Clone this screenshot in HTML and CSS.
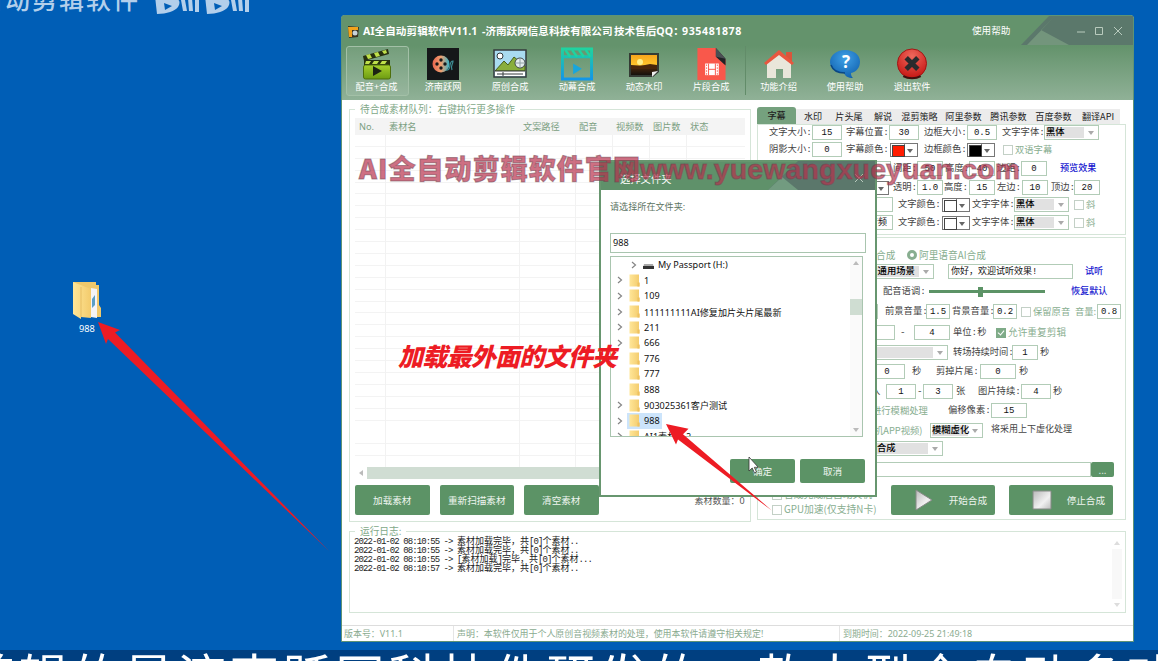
FILE: index.html
```html
<!DOCTYPE html>
<html lang="zh-CN">
<head>
<meta charset="utf-8">
<title>AI全自动剪辑软件</title>
<link rel="stylesheet" href="styles.css">
</head>
<body>
<svg class="defs" width="0" height="0">
  <defs>
    <linearGradient id="gold" x1="0" x2="1"><stop offset="0" stop-color="#ffe698"/><stop offset="1" stop-color="#f3cb6c"/></linearGradient>
    <linearGradient id="lime" x1="0" x2="0" y1="0" y2="1"><stop offset="0" stop-color="#a6cf2c"/><stop offset="1" stop-color="#6d9c12"/></linearGradient>
    <linearGradient id="aqua" x1="0" x2="0" y1="0" y2="1"><stop offset="0" stop-color="#1fd3a0"/><stop offset="1" stop-color="#1296e8"/></linearGradient>
    <linearGradient id="sunset" x1="0" x2="0" y1="0" y2="1"><stop offset="0" stop-color="#f7a51c"/><stop offset=".5" stop-color="#ffc62c"/><stop offset=".56" stop-color="#4e2a0c"/><stop offset="1" stop-color="#15110c"/></linearGradient>
    <linearGradient id="reel" x1="0" x2="1"><stop offset="0" stop-color="#e8654f"/><stop offset=".5" stop-color="#f0a070"/><stop offset="1" stop-color="#35b3c8"/></linearGradient>
    <linearGradient id="steel" x1="0" x2="1" y1="0" y2="1"><stop offset="0" stop-color="#b9b9b9"/><stop offset=".6" stop-color="#f1f1f1"/><stop offset="1" stop-color="#bdbdbd"/></linearGradient>
    <radialGradient id="blue" cx=".5" cy=".3" r=".8"><stop offset="0" stop-color="#3fa0e6"/><stop offset="1" stop-color="#0b5aa8"/></radialGradient>
    <radialGradient id="red" cx=".5" cy=".25" r=".8"><stop offset="0" stop-color="#f0685c"/><stop offset="1" stop-color="#c2120f"/></radialGradient>
    <symbol id="folder" viewBox="0 0 11 13"><path d="M.5 .5h9.500v8l.5.500v3.500H.5z" fill="url(#gold)"/><path d="M8.500 8.500h2v4h-2z" fill="#eec15e"/></symbol>
    <symbol id="chev" viewBox="0 0 6 8"><path d="M1 1l3.500 3L1 7" fill="none" stroke="#858585" stroke-width="1.200"/></symbol>
  </defs>
</svg>

<main class="desktop">
  <div class="brand">
    <span>自动剪辑软件</span>
    <svg width="98" height="16" viewBox="0 0 98 16"><g id="bili" fill="#b3cfeb"><path fill-rule="evenodd" d="M0-4h10c13 0 17 5 13 11-3 4-11 7-21 7zM9 3l1 7 7-4z"/><path d="M26 0h4l2 11h-4zM33-2h4l1 13h-4zM40 0h4v12h-4z"/></g><use href="#bili" x="50"/></svg>
  </div>

  <div class="shortcut">
    <svg width="30" height="38" viewBox="0 0 30 38"><path d="M1 1h23v3h3v20l2 3v9H11z" fill="#efc96c"/><path d="M19 7l6 1v29l-6-1z" fill="#f4f4f6"/><path d="M20 18l3-4v10l-3 3z" fill="#5b9fc5"/><path d="M1 1l18 7v29l-10-1v2L1 33z" fill="url(#gold)"/><path d="M9 6v30" stroke="#e6bd62"/></svg>
    <span>988</span>
  </div>

  <section class="app">
    <header class="app-head">
      <svg class="slab" width="112" height="29" viewBox="0 0 112 29"><path d="M28 0h84v29H0z" fill="#5b786b"/><path d="M34 0L6 29h42L20 14z" fill="#73957c"/></svg>
      <div class="titlebar">
        <svg class="app-logo" width="13" height="13" viewBox="0 0 13 13"><path d="M1 1l11 1-1 10-9 1z" fill="#3a3320"/><path d="M1 2h10v3H5v7H2z" fill="#f1a21c"/><circle cx="8" cy="8" r="2.500" fill="#c9d3d8"/></svg>
        <span class="t1">AI全自动剪辑软件V11.1</span><span class="t2">-济南跃网信息科技有限公司</span><span class="t3">技术售后QQ：</span><span class="t4">935481878</span>
        <span class="help">使用帮助</span>
        <svg class="winctl" width="50" height="12" viewBox="0 0 50 12"><path d="M2 7h8M20.500 2.500h7v7h-7zM39 2l8 8M47 2l-8 8" fill="none" stroke="#b9cbbe"/></svg>
      </div>
      <nav class="tools">
        <div class="tool on"><svg width="32" height="32" viewBox="0 0 32 32"><path d="M2 8L27 1l1 5L3 13z" fill="#27300f"/><path d="M5 7l4-1 2 4-4 1zM13 5l4-1 2 4-4 1zM21 3l4-1 1 3-3 1z" fill="#bfe04a"/><path d="M3 12h26v5H3z" fill="#27300f"/><path d="M5 13h5l-2 3H4zM13 13h5l-2 3h-5zM21 13h5l-2 3h-5z" fill="#bfe04a"/><rect x="2.500" y="17" width="27" height="14" rx="2" fill="url(#lime)" stroke="#4e6f0c"/><path d="M12 18v10l9-5z" fill="#1d2413"/></svg><span>配音+合成</span></div>
        <div class="tool"><svg width="32" height="32" viewBox="0 0 32 32"><rect width="32" height="32" fill="#151719"/><circle cx="14" cy="16" r="8.500" fill="url(#reel)"/><g fill="#151719"><circle cx="14" cy="12" r="1.700"/><circle cx="10" cy="16" r="1.700"/><circle cx="18" cy="16" r="1.700"/><circle cx="14" cy="20" r="1.700"/></g><path d="M19 22c6 1 2-9 7-9 0 4-3 4-1 9" fill="none" stroke="#3f8f96" stroke-width="1.200"/></svg><span>济南跃网</span></div>
        <div class="tool"><svg width="34" height="32" viewBox="0 0 34 32"><rect x="1" y="2" width="32" height="27" fill="#a9dbf0" stroke="#343b3d" stroke-width="1.500"/><circle cx="7" cy="8" r="3" fill="#fff" stroke="#343b3d"/><path d="M2 23l9-10 4 4 6-8 11 9v5z" fill="#89ae3c" stroke="#48601b"/><circle cx="27" cy="15" r="5" fill="#e4edef" stroke="#404849"/><path d="M27 10v10M22 15h10" stroke="#90a0a3"/><path d="M2 23h30v5H2z" fill="#fff"/><path d="M2 23h30M4 26h26M10 24v4" stroke="#343b3d"/></svg><span>原创合成</span></div>
        <div class="tool"><svg width="34" height="33" viewBox="0 0 34 33"><path d="M2 1h30v31H2zM2 9h30" fill="none" stroke="url(#aqua)" stroke-width="3"/><path d="M5 2l5 7M12 2l5 7M19 2l5 7M26 2l5 7" stroke="#1fd3a0" stroke-width="2.500"/><path d="M13 16v11l9-5.500z" fill="#18a6dc"/></svg><span>动幕合成</span></div>
        <div class="tool"><svg width="32" height="32" viewBox="0 0 32 32"><path d="M1 5h30v19l-6 5H1z" fill="#343b34"/><path d="M3 7h26v16l-5 4H3z" fill="url(#sunset)"/><circle cx="12" cy="14" r="3" fill="#fff08a"/><path d="M3 17l9 1 10-2 7 1v4H3z" fill="#4a270b"/><path d="M30 23l-6 6v-5z" fill="#efefef"/></svg><span>动态水印</span></div>
        <div class="tool"><svg width="32" height="33" viewBox="0 0 32 33"><path d="M2 0h19l10 12v21H2z" fill="#f9584b"/><path d="M21 0l10 11v7L21 9z" fill="#202326"/><path d="M21 0l10 11-10-2z" fill="#4b4f54"/><path d="M10 16h14v12H10z" fill="#fff"/><path d="M13.500 16v12M20.500 16v12M13 22h8" stroke="#f9584b"/><path d="M11.500 17v11M22.500 17v11" stroke="#f9584b" stroke-dasharray="1.500 1.500"/></svg><span>片段合成</span></div>
        <div class="tool split"><svg width="32" height="32" viewBox="0 0 32 32"><path d="M23 4h6v11h-6z" fill="#d9553b"/><path d="M4 14L16 4l12 10v16h-8v-9h-7v9H4z" fill="#e9e6da"/><path d="M1 15L16 2l15 13-2 2L16 7 3 17z" fill="#e8573f"/></svg><span>功能介绍</span></div>
        <div class="tool"><svg width="32" height="32" viewBox="0 0 32 32"><path d="M16 2c9 0 15 5 15 11.500S27 24 22 25c0 3 1 4 2 5-5 0-8-2-9-5C7 25 1 20 1 14S7 2 16 2z" fill="url(#blue)"/><path d="M2 17c2 6 8 8 14 8" fill="none" stroke="#0a4784" stroke-width="1.500"/><text x="17" y="20" class="qmark">?</text></svg><span>使用帮助</span></div>
        <div class="tool"><svg width="32" height="33" viewBox="0 0 32 33"><circle cx="16" cy="16" r="15" fill="url(#red)" stroke="#a01513"/><path d="M7 29c5 3 13 3 18 0" stroke="#41110f" stroke-width="2" fill="none"/><path d="M10 10l12 12M22 10L10 22" stroke="#2b2b2d" stroke-width="5"/></svg><span>退出软件</span></div>
      </nav>
    </header>

    <div class="work">
      <section class="group queue">
        <h2 class="legend">待合成素材队列：右键执行更多操作</h2>
        <div class="table">
          <div class="thead"><span>No.</span><span>素材名</span><span>文案路径</span><span>配音</span><span>视频数</span><span>图片数</span><span>状态</span></div>
          <div class="tbody"></div>
          <div class="hscroll"><i></i><b></b></div>
        </div>
        <div class="queue-foot"><button>加载素材</button><button>重新扫描素材</button><button>清空素材</button><span>素材数量：0</span></div>
      </section>

      <div class="settings">
        <div class="tabs"><b>字幕</b><span>水印</span><span>片头尾</span><span>解说</span><span>混剪策略</span><span>阿里参数</span><span>腾讯参数</span><span>百度参数</span><span>翻译API</span></div>
        <section class="tabpane">
          <div class="r p1"><span>文字大小:</span><u class="w30">15</u><span>字幕位置:</span><u class="w30">30</u><span>边框大小:</span><u class="w30">0.5</u><span>文字字体:</span><s class="sel w55">黑体</s></div>
          <div class="r p2"><span>阴影大小:</span><u class="w30">0</u><span>字幕颜色:</span><s class="sw red"></s><span>边框颜色:</span><s class="sw black"></s><i class="ck"></i><em>双语字幕</em></div>
          <div class="r p3"><u class="w26"></u><span>间距:</span><u class="w26">50</u><span>高度:</span><u class="w26">40</u><span>边距:</span><u class="w26">0</u><a>预览效果</a></div>
          <div class="r p4"><s class="sw"></s><span>透明:</span><u class="w26">1.0</u><span>高度:</span><u class="w26">15</u><span>左边:</span><u class="w26">10</u><span>顶边:</span><u class="w26">20</u></div>
          <div class="r p5"><u class="w30"></u><span>文字颜色:</span><s class="sw"></s><span>文字字体:</span><s class="sel w55">黑体</s><i class="ck"></i><em>斜</em></div>
          <div class="r p5"><u class="w30">音频</u><span>文字颜色:</span><s class="sw"></s><span>文字字体:</span><s class="sel w55">黑体</s><i class="ck"></i><em>斜</em></div>
        </section>

        <section class="group mix">
          <div class="r m1"><em>合成</em><i class="radio"></i><em>阿里语音AI合成</em></div>
          <div class="r m2"><s class="sel w64">-通用场景</s><u class="w125 left">你好，欢迎试听效果!</u><a>试听</a></div>
          <div class="r m3"><span>配音语调:</span><div class="slider"><i></i></div><a>恢复默认</a></div>
          <div class="r m4"><u class="w26"></u><span>前景音量:</span><u class="w24">1.5</u><span>背景音量:</span><u class="w24">0.2</u><i class="ck"></i><em>保留原音</em><em>音量:</em><u class="w24">0.8</u></div>
          <div class="r m5"><u class="w36"></u><span>-</span><u class="w36">4</u><span>单位:秒</span><i class="ck full"></i><em>允许重复剪辑</em></div>
          <div class="r m6"><s class="sel w90"></s><span>转场持续时间:</span><u class="w26">1</u><span>秒</span></div>
          <div class="r m7"><u class="w36">0</u><span>秒</span><span>剪掉片尾:</span><u class="w36">0</u><span>秒</span></div>
          <div class="r m8"><span>入</span><u class="w30">1</u><span>-</span><u class="w30">3</u><span>张</span><span>图片持续:</span><u class="w30">4</u><span>秒</span></div>
          <div class="r m9"><em>进行模糊处理</em><span>偏移像素:</span><u class="w36">15</u></div>
          <div class="r m10"><em>机APP视频)</em><s class="sel w53">模糊虚化</s><span>将采用上下虚化处理</span></div>
          <div class="r m11"><s class="sel w75">合成</s></div>
          <div class="r path"><u></u><button>...</button></div>
          <div class="actions">
            <div class="opts"><div><i class="ck"></i><em>合成完成后自动关机</em></div><div><i class="ck"></i><em>GPU加速(仅支持N卡)</em></div></div>
            <button><svg width="20" height="22" viewBox="0 0 20 22"><path d="M2 1l16 10L2 21z" fill="url(#steel)" stroke="#868a86"/></svg>开始合成</button>
            <button><svg width="20" height="22" viewBox="0 0 20 22"><path d="M1 2h18v18H1z" fill="url(#steel)" stroke="#868a86"/></svg>停止合成</button>
          </div>
        </section>
      </div>
    </div>

    <section class="group log">
      <h2 class="legend">运行日志:</h2>
      <div class="lines">
        <p><span>2022-01-02 08:10:55 -&gt; </span>素材加载完毕，共<span>[0]</span>个素材<span>..</span></p>
        <p><span>2022-01-02 08:10:55 -&gt; </span>素材加载完毕，共<span>[0]</span>个素材<span>..</span></p>
        <p><span>2022-01-02 08:10:55 -&gt; [</span>素材加载<span>]</span>完毕，共<span>[0]</span>个素材<span>...</span></p>
        <p><span>2022-01-02 08:10:57 -&gt; </span>素材加载完毕，共<span>[0]</span>个素材<span>..</span></p>
      </div>
      <div class="vscroll"><i></i><b></b><i class="down"></i></div>
    </section>
    <footer class="status"><span>版本号：V11.1</span><span>声明：本软件仅用于个人原创音视频素材的处理，使用本软件请遵守相关规定!</span><span>到期时间：2022-09-25 21:49:18</span></footer>
  </section>

  <section class="dialog">
    <header><svg class="dslab" width="107" height="29" viewBox="0 0 107 29"><path d="M30 0h77v29H0z" fill="#5b776b"/><path d="M14 16l16 13H0z" fill="#729b80"/></svg><span>选择文件夹</span><svg width="10" height="10" viewBox="0 0 10 10"><path d="M1 1l8 8M9 1L1 9" stroke="#b9cbbe"/></svg></header>
    <div class="dbody">
      <p>请选择所在文件夹:</p>
      <div class="dinput">988</div>
      <div class="tree">
        <ul>
          <li class="drive"><svg class="c"><use href="#chev"/></svg><svg class="f" viewBox="0 0 11 13"><path d="M1 6h9l1 4H0z" fill="#aaa"/><path d="M0 8h11v3H0z" fill="#333"/></svg><span>My Passport (H:)</span></li>
          <li><svg class="c"><use href="#chev"/></svg><svg class="f"><use href="#folder"/></svg><span>1</span></li>
          <li><svg class="c"><use href="#chev"/></svg><svg class="f"><use href="#folder"/></svg><span>109</span></li>
          <li><svg class="c"><use href="#chev"/></svg><svg class="f"><use href="#folder"/></svg><span>111111111AI修复加片头片尾最新</span></li>
          <li><svg class="c"><use href="#chev"/></svg><svg class="f"><use href="#folder"/></svg><span>211</span></li>
          <li><svg class="c"><use href="#chev"/></svg><svg class="f"><use href="#folder"/></svg><span>666</span></li>
          <li><svg class="c"></svg><svg class="f"><use href="#folder"/></svg><span>776</span></li>
          <li><svg class="c"></svg><svg class="f"><use href="#folder"/></svg><span>777</span></li>
          <li><svg class="c"></svg><svg class="f"><use href="#folder"/></svg><span>888</span></li>
          <li><svg class="c"><use href="#chev"/></svg><svg class="f"><use href="#folder"/></svg><span>903025361客户测试</span></li>
          <li class="picked"><svg class="c"><use href="#chev"/></svg><svg class="f"><use href="#folder"/></svg><span>988</span></li>
          <li><svg class="c"><use href="#chev"/></svg><svg class="f"><use href="#folder"/></svg><span>AI1素材 ...2</span></li>
        </ul>
        <div class="vscroll"><i></i><b></b><i class="down"></i></div>
      </div>
      <div class="dfoot"><button>确定</button><button>取消</button></div>
    </div>
  </section>

  <div class="caption"></div>
  <svg class="marks" width="1158" height="661" viewBox="0 0 1158 661">
    <g class="wm"><text x="359" y="179" textLength="281">AI全自动剪辑软件官网</text><text x="640" y="179" textLength="380" class="latin">www.yuewangxueyuan.com</text></g>
    <text class="callout" x="398" y="366" textLength="219">加载最外面的文件夹</text>
    <path d="M98 322l22 8-5 2.500L329 551 108 339l-2 5z" fill="#ed1c24"/>
    <path d="M666 424l22.500 4.700-5.500 5.600 89 76.400-94-71.200-2 5z" fill="#ed1c24"/>
    <path d="M749 457v14l3.200-3 2.300 5 2-1-2.200-4.700h4z" fill="#fff" stroke="#333" stroke-width=".8"/>
    <text class="sub" x="-34" y="695" textLength="1210">剪辑的是济南跃网科技件研发的一款大型全自动多功</text>
  </svg>
</main>
</body>
</html>
```

FILE: styles.css
```css
* { box-sizing: border-box; }
body { margin: 0; font-family: "Noto Sans", "Noto Sans CJK SC", sans-serif; }
h2, p, ul { margin: 0; padding: 0; font-weight: normal; }
.defs { position: absolute; }
.desktop { position: relative; width: 1158px; height: 661px; overflow: hidden; background: #005eb6; }
.desktop span, .desktop em, .desktop a, .desktop b, .desktop u, .desktop s, .desktop h2, .desktop p { white-space: nowrap; text-decoration: none; font-style: normal; }
svg { display: block; flex: none; overflow: visible; }
button { border: 0; padding: 0; border-radius: 2px; background: #5c9366; color: #eef5ef; font: 9.6px "Noto Sans CJK SC", sans-serif; white-space: nowrap; }

.brand { position: absolute; left: -22px; top: -17px; display: flex; color: #b3cfeb; font: 500 25px/30px "Noto Sans CJK SC", sans-serif; letter-spacing: 2px; }
.brand span { width: 177px; }
.brand svg { margin-top: 17px; }

.shortcut { position: absolute; left: 62px; top: 281px; width: 50px; display: flex; flex-direction: column; align-items: center; gap: 3px; color: #fff; font-size: 9.2px; line-height: 14px; }

.app { position: absolute; left: 341px; top: 15px; width: 793px; height: 627px; background: #fff; border: 1px solid #5f9375; border-radius: 3px 3px 0 0; display: flex; flex-direction: column; }
.app-head { position: relative; height: 84px; flex: none; background: linear-gradient(#64936c 0, #64936c 30px, #90b197 100%); overflow: hidden; color: #fff; }
.slab { position: absolute; right: 0; top: 0; }
.titlebar { position: relative; height: 30px; display: flex; align-items: center; padding-left: 5px; font: bold 10.6px/30px "Noto Sans", "Noto Sans CJK SC", sans-serif; }
.titlebar .t1 { margin-left: 3px; width: 119px; letter-spacing: .05px; }
.t2 { width: 132px; }
.t3 { width: 68px; }
.t4 { width: 60px; letter-spacing: .6px; }
.help { margin-left: 230px; width: 38px; font-size: 9.6px; font-weight: 400; }
.winctl { margin-left: 65px; }
.tools { display: flex; padding-left: 1px; }
.tool { width: 67px; height: 52px; display: flex; flex-direction: column; align-items: center; padding: 2px 3px 0 2px; font: 9.2px/13px "Noto Sans CJK SC", sans-serif; }
.tool svg { height: 32px; }
.tool span { margin-top: 0; }
.tool.on { width: 63px; height: 50px; margin: 0 1px 0 3px; padding: 1px 2px 0 0; border: 1px solid #a3c0a7; border-radius: 3px; background: rgba(255,255,255,.1); }
.tool.split { border-left: 1px solid #628c69; height: 49px; }
.qmark { font: bold 17px "Open Sans", sans-serif; fill: #fff; text-anchor: middle; }

.work { display: flex; height: 424px; flex: none; padding: 0 0 0 7px; }
.group { border: 1px solid #d5e5d8; position: relative; }
.legend { position: absolute; top: -8px; left: 5px; padding: 0 5px; background: #fff; color: #7fa888; font: 9.7px/14px "Noto Sans CJK SC", sans-serif; }
.queue { width: 402px; height: 413px; margin-top: 9px; padding: 8px 5px 0; }
.thead { display: grid; grid-template-columns: 30px 134px 56px 37px 37px 37px 1fr; height: 17px; background: #f4f4f4; color: #7b9f82; font-size: 9.2px; line-height: 17px; }
.thead span { padding-left: 4px; }
.table { width: 390px; }
.tbody { height: 332px; background:
  linear-gradient(90deg, transparent 30px, #f2f2f2 30px, #f2f2f2 31px, transparent 31px, transparent 164px, #f2f2f2 164px, #f2f2f2 165px, transparent 165px, transparent 220px, #f2f2f2 220px, #f2f2f2 221px, transparent 221px, transparent 257px, #f2f2f2 257px, #f2f2f2 258px, transparent 258px, transparent 294px, #f2f2f2 294px, #f2f2f2 295px, transparent 295px, transparent 331px, #f2f2f2 331px, #f2f2f2 332px, transparent 332px),
  repeating-linear-gradient(#fff 0, #fff 10.900px, #f3f3f3 10.900px, #f3f3f3 11.900px); }
.hscroll { height: 12px; display: flex; align-items: center; gap: 4px; padding-left: 4px; }
.hscroll i { border: 3px solid transparent; border-right: 4px solid #bbb; border-left: 0; }
.hscroll b { flex: 1; height: 12px; background: #d0ddd3; }
.queue-foot { display: flex; gap: 10px; padding-top: 6px; align-items: center; }
.queue-foot button { width: 74.500px; height: 30px; }
.queue-foot span { margin-left: 86px; font-size: 9px; color: #555; }

.settings { margin-left: 6px; width: 369px; padding-top: 7px; }
.tabs { display: grid; grid-template-columns: 39px 34px 38px 30px 43px 45px 45px 45px 44px; align-items: end; height: 17px; font: 9.1px/15px "Noto Sans CJK SC", sans-serif; color: #222; text-align: center; }
.tabs span { background: #ececec; height: 15px; }
.tabs b { background: #75a17e; font-weight: 500; height: 17px; border-radius: 3px 3px 0 0; line-height: 17px; }
.tabpane { border: 1px solid #d5e5d8; height: 111px; }
.r { display: grid; height: 15px; align-items: center; font: 9.3px/13px "Liberation Mono", "Noto Sans CJK SC", monospace; color: #444; margin-bottom: 3px; grid-template-rows: 15px; }
.r u { height: 15px; border: 1px solid #b2ccb7; background: #fff; color: #111; text-align: center; line-height: 14px; font-size: 9px; overflow: hidden; }
.r u.left { text-align: left; padding-left: 2px; font-size: 9px; }
em { color: #88ae90; font-family: "Noto Sans CJK SC", sans-serif; font-style: normal; }
.r a { color: #1818d0; font-weight: 500; font-size: 9.100px; }
.w24 { width: 24px; } .w26 { width: 26px; } .w30 { width: 30px; } .w36 { width: 36px; } .w125 { width: 125px; }
.w53 { width: 53px; } .w55 { width: 55px; } .w64 { width: 64px; } .w75 { width: 75px; } .w90 { width: 90px; }
.sel { display: block; position: relative; height: 15px; border: 1px solid #b2ccb7; background: linear-gradient(#e1e1e1, #e1e1e1) 1px 1px / calc(100% - 15px) 11px no-repeat; color: #000; font-weight: 500; padding-left: 1px; }
.sel::after, .sw::after { content: ""; position: absolute; right: 4px; top: 5px; border: 3px solid transparent; border-top: 4px solid #aaa; border-bottom: 0; }
.sw { display: block; position: relative; width: 28px; height: 14px; border: 1px solid #777; background: linear-gradient(#777, #777) 13px 0 / 1px 100% no-repeat #fff; }
.sw::before { content: ""; display: block; width: 11px; height: 10px; margin: 1px; border: 1px solid #444; background: #fff; }
.sw::after { border-top-color: #666; }
.sw.red::before { background: #ff1c00; } .sw.black::before { background: #000; }
.ck { display: block; width: 10px; height: 10px; border: 1px solid #c3d0c6; background: #fff; flex: none; }
.ck.full { background: #7fab88; border-color: #7fab88; position: relative; }
.ck.full::after { content: ""; position: absolute; left: 2px; top: 0; width: 3px; height: 5px; border: solid #fff; border-width: 0 1px 1px 0; transform: rotate(40deg); }
.radio { width: 10px; height: 10px; border: 3px solid #88ae90; border-radius: 50%; }

.p1 { padding-left: 11px; grid-template-columns: 43px 34px 43px 35px 43px 35px 42px 55px; margin-bottom: 2px; }
.p2 { padding-left: 11px; grid-template-columns: 43px 34px 44px 34px 43px 36px 12px 40px; margin-bottom: 4px; }
.p3 { padding-left: 107px; grid-template-columns: 28px 24px 28px 24px 28px 24px 39px 40px; margin-bottom: 4px; }
.p4 { padding-left: 103px; grid-template-columns: 32px 24px 27px 25px 28px 25px 29px 23px 30px; margin-bottom: 2px; }
.p5 { padding-left: 105px; grid-template-columns: 35px 44px 30px 42px 60px 12px 20px; }

.mix { height: 283px; margin-top: 2px; padding-top: 10px; }
.m1 { padding-left: 118px; grid-template-columns: 31px 12px 80px; height: 14px; grid-template-rows: 14px; margin-bottom: 2px; }
.m1 em { font-size: 9.700px; }
.m2 { padding-left: 112px; grid-template-columns: 78px 137px 20px; margin-bottom: 5px; }
.m3 { padding-left: 125px; grid-template-columns: 46px 142px 40px; margin-bottom: 5px; }
.m4 { padding-left: 94px; grid-template-columns: 33px 41px 26px 41px 28px 12px 42px 22px 24px; margin-bottom: 6px; }
.m5 { padding-left: 101px; grid-template-columns: 41px 14px 39px 43px 12px 60px; margin-bottom: 5px; }
.m5 em { font-size: 9.700px; }
.m6 { padding-left: 100px; grid-template-columns: 95px 59px 28px 10px; margin-bottom: 4px; }
.m6 span { letter-spacing: -.1px; }
.m7 { padding-left: 111px; grid-template-columns: 43px 24px 44px 39px 10px; margin-bottom: 5px; }
.m8 { padding-left: 113px; grid-template-columns: 15px 31px 6px 33px 22px 43px 32px 10px; margin-bottom: 4px; }
.m9 { padding-left: 114px; grid-template-columns: 76px 43px 36px; margin-bottom: 5px; }
.m10 { padding-left: 116px; grid-template-columns: 56px 61px 90px; }
.m10 span { font-size: 9px; }
.m11 { padding-left: 110px; margin-bottom: 6px; }
.m11 .sel { padding-left: 8px; }
.path { padding-left: 80px; grid-template-columns: 253px 23px; margin-bottom: 8px; }
.path button { height: 15px; line-height: 12px; }
.slider { width: 116px; height: 10px; background: linear-gradient(#5c9366, #5c9366) 0 3px / 100% 3px no-repeat; }
.slider i { display: block; width: 5px; height: 10px; margin-left: 49px; background: #5c9366; }
.actions { display: grid; grid-template-columns: 105px 104px 104px; gap: 0 14px; padding-left: 14px; }
.actions button { height: 30px; display: flex; align-items: center; justify-content: flex-end; gap: 15px; padding-right: 8px; }
.opts { display: flex; flex-direction: column; gap: 2px; padding-top: 3px; font: 9.8px/13px "Noto Sans CJK SC", sans-serif; }
.opts div { display: flex; align-items: center; gap: 2px; }

.log { height: 82px; width: 777px; margin: 7px 0 0 7px; padding: 4px 2px 0 4px; display: flex; justify-content: space-between; flex: none; }
.lines { font: 9px/9px "Noto Sans CJK SC", sans-serif; color: #222; }
.lines p { height: 9px; }
.lines span { font-family: "Liberation Mono", monospace; letter-spacing: -.92px; white-space: pre; }
.vscroll { width: 12px; display: flex; flex-direction: column; align-items: center; justify-content: space-between; padding: 5px 0; }
.vscroll i { border: 3px solid transparent; border-bottom: 4px solid #bbb; border-top: 0; }
.vscroll i.down { transform: rotate(180deg); }
.log .vscroll b { flex: 1; width: 10px; margin: 4px; background: #f8f8f8; }
.log .vscroll i { border-bottom-color: #ddd; }
.status { margin-top: 12px; height: 16px; border-top: 1px solid #ddd; display: grid; grid-template-columns: 111px 386px 1fr; font-size: 8.950px; line-height: 15px; color: #8aab90; }
.status span { padding-left: 2px; }
.status span + span { border-left: 1px solid #e5e5e5; padding-left: 3px; }

.dialog { position: absolute; left: 599px; top: 160px; width: 278px; height: 337px; border: 2px solid #67966f; background: #fff; }
.dialog header { position: relative; height: 28px; background: #5f916a; display: flex; align-items: center; justify-content: space-between; padding: 4px 11px 0 19px; color: #fff; font-size: 10.300px; }
.dialog header svg:last-child { position: relative; }
.dslab { position: absolute; right: 0; top: -1px; }
.dbody { padding: 10px 9px 0 9px; font-size: 9.100px; color: #667; }
.dbody p { height: 33px; line-height: 13px; color: #5d7463; }
.dinput { height: 20px; border: 1px solid #a9c5af; line-height: 17px; padding-left: 2px; color: #111; }
.tree { margin: 3px 3px 0 0; height: 181px; border: 1px solid #a9c5af; display: flex; overflow: hidden; }
.tree ul { flex: 1; list-style: none; }
.tree li { display: flex; align-items: center; height: 15.600px; padding-left: 6px; color: #111; }
.tree .c { width: 6px; height: 8px; }
.tree .f { width: 11px; height: 13px; margin: 0 4px 0 6px; }
.tree .drive { padding-left: 20px; }
.picked { background: linear-gradient(#cce4fb, #cce4fb) 16px 0 / 35px 100% no-repeat; }
.tree .vscroll { background: #fafafa; padding: 4px 0; }
.tree .vscroll b { width: 12px; height: 16px; background: #cfddd2; margin-bottom: 80px; }
.dfoot { display: flex; justify-content: flex-end; gap: 5px; padding: 22px 1px 0 0; }
.dfoot button { width: 65px; height: 24px; }

.caption { position: absolute; left: 0; bottom: 0; width: 100%; height: 11px; background: #003f80; }
.marks { position: absolute; left: 0; top: 0; overflow: hidden; }
.wm { font: 900 27px "Noto Sans CJK SC", sans-serif; fill: #b8304c; fill-opacity: .7; stroke: #6b4450; stroke-opacity: .5; stroke-width: 1px; }
.wm .latin { font: bold 28.500px "Liberation Sans", sans-serif; }
.callout { font: italic 900 25px "Noto Sans CJK SC", sans-serif; fill: #ed1c24; }
.sub { font: 400 49px "Noto Sans CJK SC", sans-serif; fill: #fff; }
```
